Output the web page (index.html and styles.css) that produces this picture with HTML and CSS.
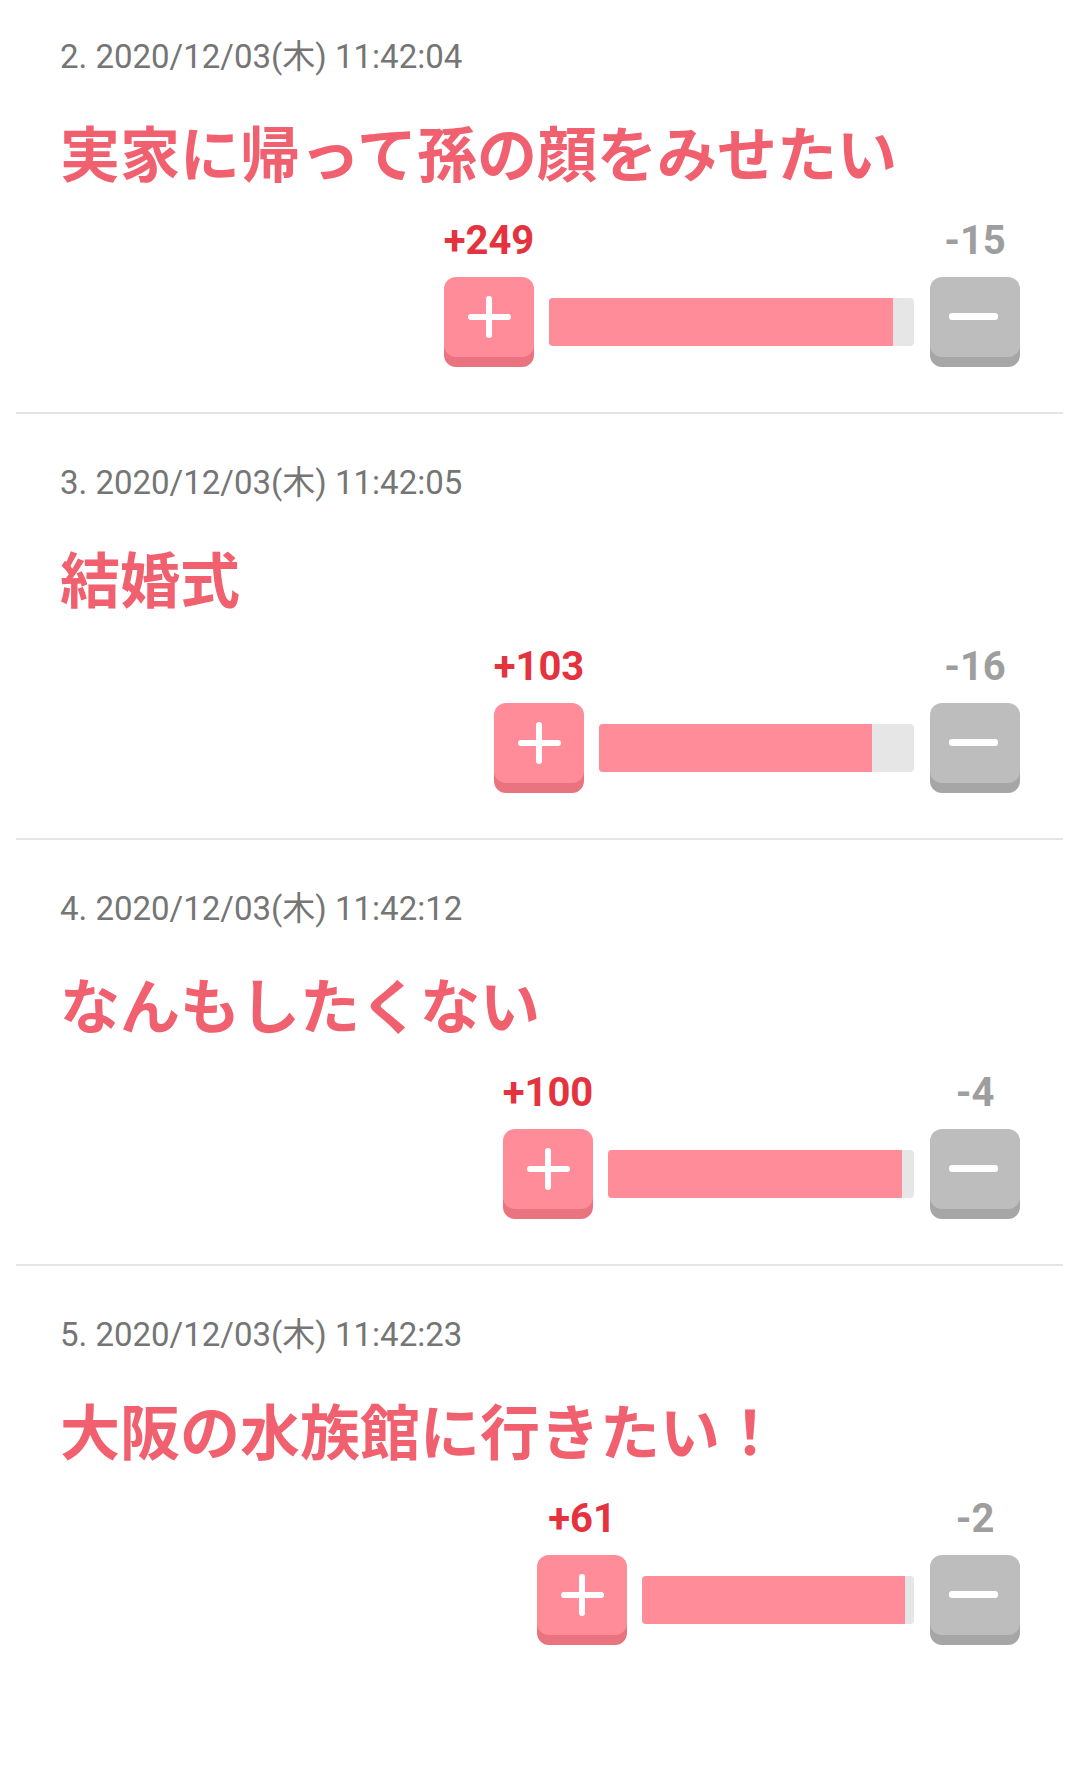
FILE: index.html
```html
<!DOCTYPE html>
<html lang="ja">
<head>
<meta charset="utf-8">
<title>投票</title>
<link rel="stylesheet" href="styles.css">
</head>
<body>
<div class="list">
  <div class="item item-first">
    <div class="stamp">2. 2020/12/03(木) 11:42:04</div>
    <div class="title">実家に帰って孫の顔をみせたい</div>
    <div class="votes">
      <div class="count count-plus">+249</div>
      <div class="spacer"></div>
      <div class="count count-minus">-15</div>
      <div class="btn btn-plus"><span class="ico-h"></span><span class="ico-v"></span></div>
      <div class="bar" style="width:365px"><div class="fill" style="width:94.3%"></div></div>
      <div class="btn btn-minus"><span class="ico-m"></span></div>
    </div>
  </div>
  <div class="item">
    <div class="stamp">3. 2020/12/03(木) 11:42:05</div>
    <div class="title">結婚式</div>
    <div class="votes">
      <div class="count count-plus">+103</div>
      <div class="spacer"></div>
      <div class="count count-minus">-16</div>
      <div class="btn btn-plus"><span class="ico-h"></span><span class="ico-v"></span></div>
      <div class="bar" style="width:315px"><div class="fill" style="width:86.6%"></div></div>
      <div class="btn btn-minus"><span class="ico-m"></span></div>
    </div>
  </div>
  <div class="item">
    <div class="stamp">4. 2020/12/03(木) 11:42:12</div>
    <div class="title">なんもしたくない</div>
    <div class="votes">
      <div class="count count-plus">+100</div>
      <div class="spacer"></div>
      <div class="count count-minus">-4</div>
      <div class="btn btn-plus"><span class="ico-h"></span><span class="ico-v"></span></div>
      <div class="bar" style="width:306px"><div class="fill" style="width:96.2%"></div></div>
      <div class="btn btn-minus"><span class="ico-m"></span></div>
    </div>
  </div>
  <div class="item item-last">
    <div class="stamp">5. 2020/12/03(木) 11:42:23</div>
    <div class="title">大阪の水族館に行きたい！</div>
    <div class="votes">
      <div class="count count-plus">+61</div>
      <div class="spacer"></div>
      <div class="count count-minus">-2</div>
      <div class="btn btn-plus"><span class="ico-h"></span><span class="ico-v"></span></div>
      <div class="bar" style="width:272px"><div class="fill" style="width:96.8%"></div></div>
      <div class="btn btn-minus"><span class="ico-m"></span></div>
    </div>
  </div>
</div>
</body>
</html>
```

FILE: styles.css
```css
html, body {
  margin: 0;
  padding: 0;
  background: #ffffff;
}
body {
  font-family: Roboto, "Noto Sans CJK JP", sans-serif;
  height: 1770px;
  overflow: hidden;
}
.list {
  margin: 0 16px;
}
.item {
  padding: 49px 43px 45px 44px;
  border-bottom: 2px solid #e4e4e4;
}
.item-first {
  padding-top: 37px;
}
.item-last {
  border-bottom: none;
}
.stamp {
  font-family: Roboto, "Noto Sans CJK JP", sans-serif;
  font-size: 33px;
  line-height: 40px;
  color: #757575;
  height: 40px;
  white-space: nowrap;
}
.title {
  margin-top: 34px;
  font-family: "Noto Sans CJK JP", sans-serif;
  font-weight: 700;
  font-size: 60px;
  line-height: 80px;
  height: 80px;
  color: #f0606e;
  white-space: nowrap;
}
.votes {
  margin-top: 26px;
  display: grid;
  grid-template-columns: 90px auto 90px;
  grid-template-rows: 48px 90px;
  row-gap: 12px;
  justify-content: end;
}
.count {
  font-family: Roboto, sans-serif;
  font-weight: 700;
  font-size: 40px;
  line-height: 48px;
  text-align: center;
  white-space: nowrap;
  justify-self: center;
}
.count-plus {
  color: #e4333f;
}
.count-minus {
  color: #9e9e9e;
}
.btn {
  position: relative;
  width: 90px;
  height: 80px;
  border-radius: 12px;
  align-self: start;
}
.btn-plus {
  background: #ff8c98;
  box-shadow: 0 10px 0 #ea7380;
}
.btn-minus {
  background: #bdbdbd;
  box-shadow: 0 10px 0 #a6a6a6;
}
.ico-h, .ico-v, .ico-m {
  position: absolute;
  background: #ffffff;
  border-radius: 3px;
}
.ico-h {
  left: 24px;
  top: 37px;
  width: 43px;
  height: 6px;
}
.ico-v {
  left: 42px;
  top: 19px;
  width: 6px;
  height: 42px;
}
.ico-m {
  left: 19px;
  top: 36px;
  width: 49px;
  height: 7px;
}
.bar {
  align-self: center;
  height: 48px;
  margin: 0 16px 0 15px;
  background: #e6e6e6;
  border-radius: 4px;
  overflow: hidden;
}
.fill {
  height: 100%;
  background: #ff8c99;
}
```
